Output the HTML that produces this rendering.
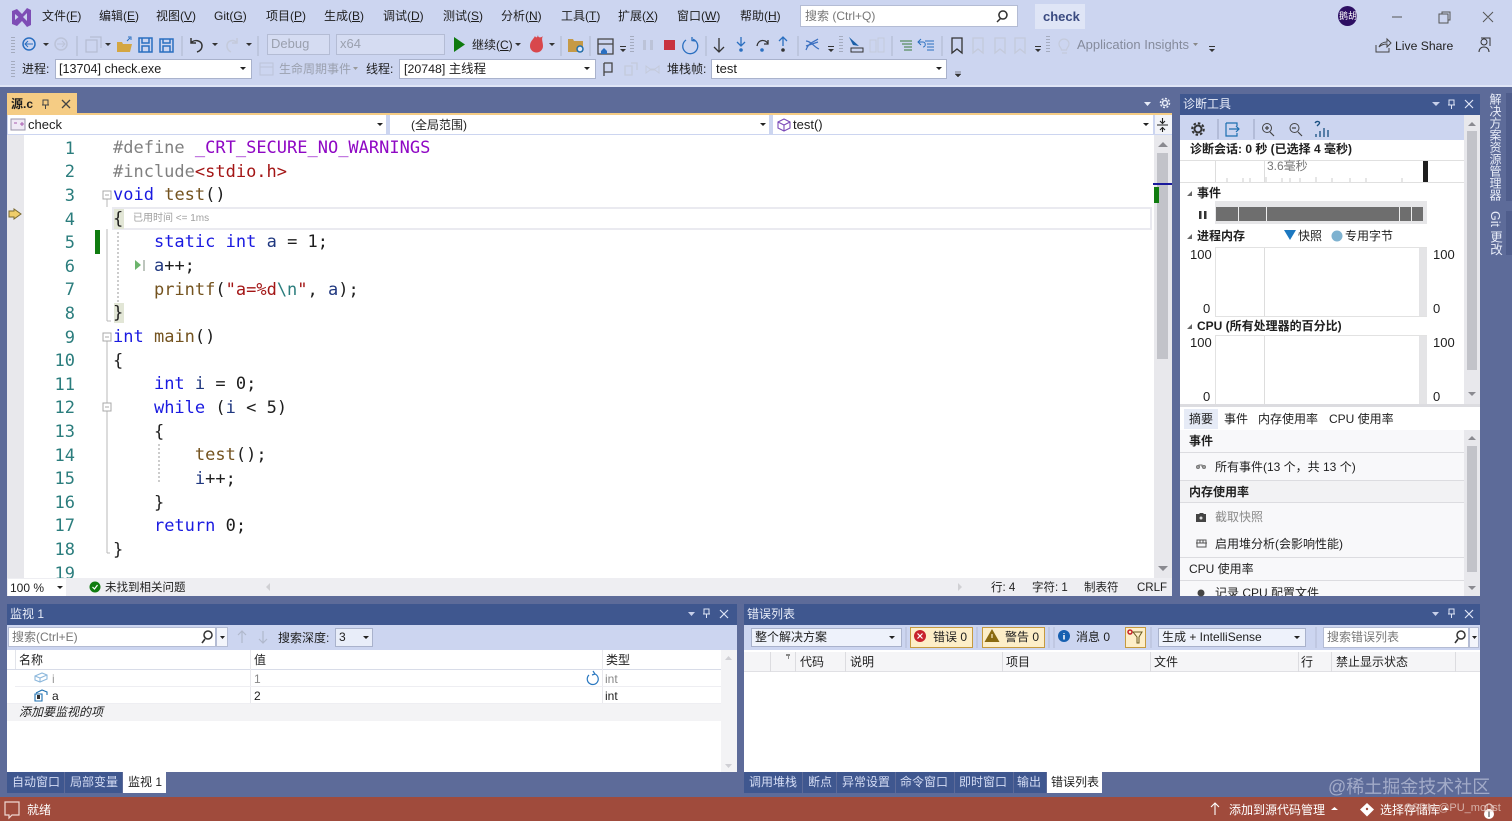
<!DOCTYPE html>
<html lang="zh">
<head>
<meta charset="utf-8">
<style>
html,body{margin:0;padding:0}
body{width:1512px;height:821px;overflow:hidden;position:relative;background:#5d6b99;font:12px/16px "Liberation Sans","Noto Sans CJK SC",sans-serif;color:#1e1e1e}
.b{position:absolute;box-sizing:border-box}
.t{position:absolute;white-space:nowrap;line-height:16px}
.c{position:absolute;white-space:pre;font:17px/24px "DejaVu Sans Mono","Liberation Mono",monospace;color:#1e1e1e;left:113px}
.n{position:absolute;font:17px/24px "DejaVu Sans Mono","Liberation Mono",monospace;color:#2b7d7d;width:51px;left:24px;text-align:right}
.k{color:#1a1ae0}.f{color:#74531f}.v{color:#1f377f}.s{color:#a31515}.m{color:#8f08c4}.e{color:#2b7d7d}.g{color:#808080}
.w{color:#fff}.gr{color:#9aa0ae}
u{text-decoration:underline}
svg{position:absolute;left:0;top:0}
</style>
</head>
<body>
<!-- top chrome -->
<div class="b" style="left:0;top:0;width:1512px;height:86px;background:#ccd5f0"></div>
<div class="b" style="left:0;top:85px;width:1512px;height:2px;background:#dfe5f6"></div>
<div class="t" style="left:42px;top:8px">文件(<u>F</u>)</div>
<div class="t" style="left:99px;top:8px">编辑(<u>E</u>)</div>
<div class="t" style="left:156px;top:8px">视图(<u>V</u>)</div>
<div class="t" style="left:214px;top:8px">Git(<u>G</u>)</div>
<div class="t" style="left:266px;top:8px">项目(<u>P</u>)</div>
<div class="t" style="left:324px;top:8px">生成(<u>B</u>)</div>
<div class="t" style="left:383px;top:8px">调试(<u>D</u>)</div>
<div class="t" style="left:443px;top:8px">测试(<u>S</u>)</div>
<div class="t" style="left:501px;top:8px">分析(<u>N</u>)</div>
<div class="t" style="left:561px;top:8px">工具(<u>T</u>)</div>
<div class="t" style="left:618px;top:8px">扩展(<u>X</u>)</div>
<div class="t" style="left:677px;top:8px">窗口(<u>W</u>)</div>
<div class="t" style="left:740px;top:8px">帮助(<u>H</u>)</div>
<div class="b" style="left:800px;top:5px;width:218px;height:22px;background:#fff;border:1px solid #b4bcd4"></div>
<div class="t" style="left:805px;top:8px;color:#777">搜索 (Ctrl+Q)</div>
<div class="b" style="left:1035px;top:4px;width:50px;height:25px;background:#dfe5f6"></div>
<div class="t" style="left:1043px;top:9px;font-weight:bold;color:#3a4a80;font-size:13px">check</div>
<div class="b" style="left:1338px;top:6px;width:19px;height:20px;border-radius:50%;background:#2d0f63"></div>
<div class="t" style="left:1339px;top:8px;color:#fff;font-size:9px">鹅胡</div>

<!-- toolbar row 2 -->
<div class="b" style="left:267px;top:34px;width:63px;height:21px;border:1px solid #b4bcd4;background:#d5dcf2"></div>
<div class="t gr" style="left:271px;top:36px;font-size:13px">Debug</div>
<div class="b" style="left:336px;top:34px;width:109px;height:21px;border:1px solid #b4bcd4;background:#d5dcf2"></div>
<div class="t gr" style="left:340px;top:36px;font-size:13px">x64</div>
<div class="t" style="left:472px;top:37px">继续(<u>C</u>)</div>
<div class="t gr" style="left:1077px;top:37px;font-size:13px;color:#858b9c">Application Insights</div>
<div class="t" style="left:1395px;top:38px;font-size:12.2px;color:#222">Live Share</div>

<!-- toolbar row 3 -->
<div class="t" style="left:22px;top:61px">进程:</div>
<div class="b" style="left:55px;top:59px;width:197px;height:20px;background:#fff;border:1px solid #a9b2cc"></div>
<div class="t" style="left:59px;top:61px;font-size:12.6px">[13704] check.exe</div>
<div class="t gr" style="left:279px;top:61px">生命周期事件</div>
<div class="t" style="left:366px;top:61px">线程:</div>
<div class="b" style="left:399px;top:59px;width:197px;height:20px;background:#fff;border:1px solid #a9b2cc"></div>
<div class="t" style="left:404px;top:61px;font-size:12.4px">[20748] 主线程</div>
<div class="t" style="left:667px;top:61px">堆栈帧:</div>
<div class="b" style="left:711px;top:59px;width:236px;height:20px;background:#fff;border:1px solid #a9b2cc"></div>
<div class="t" style="left:716px;top:61px;font-size:13px">test</div>

<!-- editor tab -->
<div class="b" style="left:7px;top:93px;width:70px;height:21px;background:#f5cc84"></div>
<div class="t" style="left:11px;top:96px;font-weight:bold">源.c</div>
<div class="b" style="left:7px;top:113px;width:1165px;height:2px;background:#f5cc84"></div>

<!-- nav bar -->
<div class="b" style="left:7px;top:115px;width:1165px;height:20px;background:#ccd5f0"></div>
<div class="b" style="left:8px;top:115px;width:378px;height:19px;background:#fff"></div>
<div class="b" style="left:390px;top:115px;width:379px;height:19px;background:#fff"></div>
<div class="b" style="left:773px;top:115px;width:380px;height:19px;background:#fff"></div>
<div class="b" style="left:1155px;top:115px;width:17px;height:19px;background:#f3f4f8"></div>
<div class="t" style="left:28px;top:117px;font-size:13px">check</div>
<div class="t" style="left:411px;top:117px">(全局范围)</div>
<div class="t" style="left:793px;top:117px;font-size:13px">test()</div>

<!-- editor -->
<div class="b" style="left:7px;top:135px;width:1165px;height:443px;background:#fff;overflow:hidden"></div>
<div class="b" style="left:7px;top:135px;width:17px;height:443px;background:#e8e8ec"></div>
<div class="b" style="left:112px;top:207px;width:1040px;height:23px;border:2px solid #eaeaf0;background:#fff"></div>
<div class="b" style="left:114px;top:209px;width:10px;height:20px;background:#e2e6d6"></div>
<div class="b" style="left:114px;top:303px;width:10px;height:20px;background:#e2e6d6"></div>
<div class="b" style="left:95px;top:230px;width:5px;height:24px;background:#107c10"></div>

<div class="n" style="top:137px">1</div><div class="n" style="top:160px">2</div><div class="n" style="top:184px">3</div><div class="n" style="top:208px">4</div><div class="n" style="top:231px">5</div><div class="n" style="top:255px">6</div><div class="n" style="top:278px">7</div><div class="n" style="top:302px">8</div><div class="n" style="top:326px">9</div><div class="n" style="top:349px">10</div><div class="n" style="top:373px">11</div><div class="n" style="top:396px">12</div><div class="n" style="top:420px">13</div><div class="n" style="top:444px">14</div><div class="n" style="top:467px">15</div><div class="n" style="top:491px">16</div><div class="n" style="top:514px">17</div><div class="n" style="top:538px">18</div><div class="n" style="top:562px;height:16px;overflow:hidden">19</div>

<div class="c" style="top:136px"><span class="g">#define</span> <span class="m">_CRT_SECURE_NO_WARNINGS</span></div>
<div class="c" style="top:160px"><span class="g">#include</span><span class="s">&lt;stdio.h&gt;</span></div>
<div class="c" style="top:183px"><span class="k">void</span> <span class="f">test</span>()</div>
<div class="c" style="top:207px">{</div>
<div class="t" style="left:133px;top:211px;font-size:10px;color:#a0a0a0">已用时间 &lt;= 1ms</div>
<div class="c" style="top:230px">    <span class="k">static</span> <span class="k">int</span> <span class="v">a</span> = 1;</div>
<div class="c" style="top:254px">    <span class="v">a</span>++;</div>
<div class="c" style="top:278px">    <span class="f">printf</span>(<span class="s">"a=%d</span><span class="e">\n</span><span class="s">"</span>, <span class="v">a</span>);</div>
<div class="c" style="top:301px">}</div>
<div class="c" style="top:325px"><span class="k">int</span> <span class="f">main</span>()</div>
<div class="c" style="top:349px">{</div>
<div class="c" style="top:372px">    <span class="k">int</span> <span class="v">i</span> = 0;</div>
<div class="c" style="top:396px">    <span class="k">while</span> (<span class="v">i</span> &lt; 5)</div>
<div class="c" style="top:420px">    {</div>
<div class="c" style="top:443px">        <span class="f">test</span>();</div>
<div class="c" style="top:467px">        <span class="v">i</span>++;</div>
<div class="c" style="top:491px">    }</div>
<div class="c" style="top:514px">    <span class="k">return</span> 0;</div>
<div class="c" style="top:538px">}</div>

<!-- editor scrollbar -->
<div class="b" style="left:1154px;top:135px;width:18px;height:443px;background:#e8e8ec"></div>
<div class="b" style="left:1157px;top:153px;width:11px;height:206px;background:#c2c3c9"></div>
<div class="b" style="left:1153px;top:183px;width:19px;height:2px;background:#1a1a9c"></div>
<div class="b" style="left:1154px;top:187px;width:5px;height:16px;background:#107c10"></div>

<!-- editor status -->
<div class="b" style="left:7px;top:578px;width:1165px;height:18px;background:#eeeef2"></div>
<div class="b" style="left:8px;top:579px;width:58px;height:17px;background:#fff"></div>
<div class="t" style="left:10px;top:580px">100 %</div>
<div class="t" style="left:105px;top:580px;font-size:11.5px">未找到相关问题</div>
<div class="t" style="left:991px;top:580px;font-size:11.5px">行: 4</div>
<div class="t" style="left:1032px;top:580px;font-size:11.5px">字符: 1</div>
<div class="t" style="left:1084px;top:580px;font-size:11.5px">制表符</div>
<div class="t" style="left:1137px;top:580px;font-size:11.5px">CRLF</div>

<!-- diagnostics -->
<div class="b" style="left:1180px;top:94px;width:300px;height:21px;background:#3f578f"></div>
<div class="t" style="left:1183px;top:96px;color:#e8ecf8">诊断工具</div>
<div class="b" style="left:1180px;top:115px;width:300px;height:481px;background:#fff"></div>
<div class="b" style="left:1180px;top:115px;width:284px;height:25px;background:#ccd5f0"></div>
<div class="b" style="left:1464px;top:115px;width:16px;height:289px;background:#e8e8ec"></div>
<div class="b" style="left:1467px;top:131px;width:10px;height:239px;background:#c2c3c9"></div>
<div class="t" style="left:1190px;top:141px;font-weight:bold">诊断会话: 0 秒 (已选择 4 毫秒)</div>
<div class="b" style="left:1180px;top:160px;width:284px;height:1px;background:#e0e0e0"></div>
<div class="b" style="left:1180px;top:182px;width:284px;height:1px;background:#e0e0e0"></div>
<div class="b" style="left:1215px;top:161px;width:1px;height:21px;background:#ddd"></div>
<div class="b" style="left:1264px;top:161px;width:1px;height:21px;background:#ddd"></div>
<div class="t" style="left:1267px;top:158px;color:#777">3.6毫秒</div>
<div class="b" style="left:1423px;top:161px;width:5px;height:21px;background:#1e1e1e"></div>
<div class="t" style="left:1197px;top:185px;font-weight:bold">事件</div>
<div class="b" style="left:1215px;top:201px;width:212px;height:23px;background:#e6e6e8"></div>
<div class="b" style="left:1216px;top:207px;width:207px;height:14px;background:#6e6e6e"></div>
<div class="b" style="left:1238px;top:207px;width:1px;height:14px;background:#eee"></div>
<div class="b" style="left:1266px;top:207px;width:1px;height:14px;background:#eee"></div>
<div class="b" style="left:1399px;top:207px;width:1px;height:14px;background:#eee"></div>
<div class="b" style="left:1411px;top:207px;width:1px;height:14px;background:#eee"></div>
<div class="t" style="left:1197px;top:228px;font-weight:bold">进程内存</div>
<div class="t" style="left:1298px;top:228px">快照</div>
<div class="t" style="left:1345px;top:228px">专用字节</div>
<div class="b" style="left:1215px;top:247px;width:212px;height:70px;border:1px solid #e2e2e2"></div>
<div class="b" style="left:1264px;top:248px;width:1px;height:68px;background:#ddd"></div>
<div class="b" style="left:1419px;top:248px;width:8px;height:68px;background:#e4e4e6"></div>
<div class="t" style="left:1190px;top:247px;font-size:13px">100</div>
<div class="t" style="left:1433px;top:247px;font-size:13px">100</div>
<div class="t" style="left:1203px;top:301px;font-size:13px">0</div>
<div class="t" style="left:1433px;top:301px;font-size:13px">0</div>
<div class="t" style="left:1197px;top:318px;font-weight:bold">CPU (所有处理器的百分比)</div>
<div class="b" style="left:1215px;top:335px;width:212px;height:69px;border:1px solid #e2e2e2;border-bottom:0"></div>
<div class="b" style="left:1264px;top:336px;width:1px;height:68px;background:#ddd"></div>
<div class="b" style="left:1419px;top:336px;width:8px;height:68px;background:#e4e4e6"></div>
<div class="t" style="left:1190px;top:335px;font-size:13px">100</div>
<div class="t" style="left:1433px;top:335px;font-size:13px">100</div>
<div class="t" style="left:1203px;top:389px;font-size:13px">0</div>
<div class="t" style="left:1433px;top:389px;font-size:13px">0</div>
<div class="b" style="left:1180px;top:404px;width:300px;height:3px;background:#dcdce0"></div>
<div class="b" style="left:1184px;top:409px;width:34px;height:20px;background:#e6ebf6"></div>
<div class="t" style="left:1189px;top:411px">摘要</div>
<div class="t" style="left:1224px;top:411px">事件</div>
<div class="t" style="left:1258px;top:411px">内存使用率</div>
<div class="t" style="left:1329px;top:411px">CPU 使用率</div>
<div class="b" style="left:1180px;top:430px;width:284px;height:166px;background:#f8f8fa"></div>
<div class="b" style="left:1464px;top:430px;width:16px;height:166px;background:#e8e8ec"></div>
<div class="b" style="left:1467px;top:446px;width:10px;height:126px;background:#c2c3c9"></div>
<div class="b" style="left:1180px;top:452px;width:284px;height:1px;background:#dcdce0"></div>
<div class="b" style="left:1180px;top:480px;width:284px;height:23px;background:#f2f2f4;border-top:1px solid #dcdce0;border-bottom:1px solid #dcdce0"></div>
<div class="b" style="left:1180px;top:557px;width:284px;height:1px;background:#dcdce0"></div>
<div class="b" style="left:1180px;top:580px;width:284px;height:1px;background:#dcdce0"></div>
<div class="t" style="left:1189px;top:433px;font-weight:bold">事件</div>
<div class="t" style="left:1215px;top:459px">所有事件(13 个，共 13 个)</div>
<div class="t" style="left:1189px;top:484px;font-weight:bold">内存使用率</div>
<div class="t" style="left:1215px;top:509px;color:#8a8a8a">截取快照</div>
<div class="t" style="left:1215px;top:536px">启用堆分析(会影响性能)</div>
<div class="t" style="left:1189px;top:561px">CPU 使用率</div>
<div class="b" style="left:1215px;top:585px;width:240px;height:11px;overflow:hidden"><div class="t" style="left:0;top:0">记录 CPU 配置文件</div></div>
<div class="b" style="left:1506px;top:93px;width:6px;height:108px;background:#4f5d8c"></div>
<div class="b" style="left:1506px;top:211px;width:6px;height:44px;background:#4f5d8c"></div>
<div class="t" style="left:1487px;top:93px;writing-mode:vertical-rl;font-size:12px;letter-spacing:0;color:#e8ecf8">解决方案资源管理器</div>
<div class="t" style="left:1487px;top:211px;writing-mode:vertical-rl;font-size:12.5px;color:#e8ecf8">Git 更改</div>

<!-- watch -->
<div class="b" style="left:7px;top:604px;width:730px;height:21px;background:#3f578f"></div>
<div class="t" style="left:10px;top:606px;color:#e8ecf8">监视 1</div>
<div class="b" style="left:7px;top:625px;width:730px;height:25px;background:#ccd5f0"></div>
<div class="b" style="left:8px;top:627px;width:208px;height:20px;background:#fff;border:1px solid #b4bcd4"></div>
<div class="b" style="left:216px;top:627px;width:12px;height:20px;background:#f3f5fb;border:1px solid #b4bcd4"></div>
<div class="t" style="left:12px;top:629px;color:#777">搜索(Ctrl+E)</div>
<div class="t" style="left:278px;top:630px">搜索深度:</div>
<div class="b" style="left:335px;top:628px;width:38px;height:19px;background:#e8edf9;border:1px solid #a9b2cc"></div>
<div class="t" style="left:339px;top:629px">3</div>
<div class="b" style="left:7px;top:650px;width:730px;height:122px;background:#fff"></div>
<div class="b" style="left:7px;top:650px;width:714px;height:20px;border-bottom:1px solid #d8dce8"></div>
<div class="b" style="left:15px;top:650px;width:1px;height:19px;background:#e2e4ea"></div>
<div class="b" style="left:250px;top:650px;width:1px;height:54px;background:#e8e8ec"></div>
<div class="b" style="left:602px;top:650px;width:1px;height:54px;background:#e8e8ec"></div>
<div class="b" style="left:721px;top:650px;width:16px;height:122px;background:#f3f3f5"></div>
<div class="b" style="left:15px;top:686px;width:706px;height:1px;background:#eeeef2"></div>
<div class="b" style="left:7px;top:703px;width:714px;height:1px;background:#eeeef2"></div>
<div class="b" style="left:7px;top:704px;width:714px;height:17px;background:#f3f3f5"></div>
<div class="t" style="left:19px;top:652px">名称</div>
<div class="t" style="left:254px;top:652px">值</div>
<div class="t" style="left:606px;top:652px">类型</div>
<div class="t" style="left:52px;top:671px;color:#999">i</div>
<div class="t" style="left:254px;top:671px;color:#888">1</div>
<div class="t" style="left:605px;top:671px;color:#888">int</div>
<div class="t" style="left:52px;top:688px">a</div>
<div class="t" style="left:254px;top:688px">2</div>
<div class="t" style="left:605px;top:688px">int</div>
<div class="t" style="left:19px;top:704px;font-style:italic">添加要监视的项</div>
<div class="b" style="left:7px;top:772px;width:57px;height:21px;background:#3f578f"></div>
<div class="b" style="left:65px;top:772px;width:57px;height:21px;background:#3f578f"></div>
<div class="b" style="left:123px;top:772px;width:43px;height:21px;background:#fff"></div>
<div class="t" style="left:12px;top:774px;color:#d4dcf4">自动窗口</div>
<div class="t" style="left:70px;top:774px;color:#d4dcf4">局部变量</div>
<div class="t" style="left:128px;top:774px">监视 1</div>

<!-- errors -->
<div class="b" style="left:744px;top:604px;width:736px;height:21px;background:#3f578f"></div>
<div class="t" style="left:747px;top:606px;color:#e8ecf8">错误列表</div>
<div class="b" style="left:744px;top:625px;width:736px;height:25px;background:#ccd5f0"></div>
<div class="b" style="left:751px;top:628px;width:151px;height:19px;background:#eef2fb;border:1px solid #a9b2cc"></div>
<div class="t" style="left:755px;top:629px">整个解决方案</div>
<div class="b" style="left:910px;top:627px;width:63px;height:21px;background:#fdeec8;border:1px solid #c69a3e"></div>
<div class="t" style="left:933px;top:629px">错误 0</div>
<div class="b" style="left:982px;top:627px;width:63px;height:21px;background:#fdeec8;border:1px solid #c69a3e"></div>
<div class="t" style="left:1005px;top:629px">警告 0</div>
<div class="t" style="left:1076px;top:629px">消息 0</div>
<div class="b" style="left:1125px;top:627px;width:21px;height:21px;background:#fdeec8;border:1px solid #c69a3e"></div>
<div class="b" style="left:1158px;top:628px;width:148px;height:19px;background:#eef2fb;border:1px solid #a9b2cc"></div>
<div class="t" style="left:1162px;top:629px">生成 + IntelliSense</div>
<div class="b" style="left:1323px;top:627px;width:146px;height:21px;background:#fff;border:1px solid #b4bcd4"></div>
<div class="b" style="left:1469px;top:627px;width:10px;height:21px;background:#f3f5fb;border:1px solid #b4bcd4"></div>
<div class="t" style="left:1327px;top:629px;color:#777">搜索错误列表</div>
<div class="b" style="left:744px;top:650px;width:736px;height:122px;background:#fff"></div>
<div class="b" style="left:744px;top:652px;width:736px;height:20px;background:#f5f5f7;border-bottom:1px solid #e0e0e4"></div>
<div class="b" style="left:770px;top:652px;width:1px;height:20px;background:#dcdce0"></div>
<div class="b" style="left:795px;top:652px;width:1px;height:20px;background:#dcdce0"></div>
<div class="b" style="left:845px;top:652px;width:1px;height:20px;background:#dcdce0"></div>
<div class="b" style="left:1002px;top:652px;width:1px;height:20px;background:#dcdce0"></div>
<div class="b" style="left:1150px;top:652px;width:1px;height:20px;background:#dcdce0"></div>
<div class="b" style="left:1298px;top:652px;width:1px;height:20px;background:#dcdce0"></div>
<div class="b" style="left:1331px;top:652px;width:1px;height:20px;background:#dcdce0"></div>
<div class="b" style="left:1455px;top:652px;width:1px;height:20px;background:#dcdce0"></div>
<div class="t" style="left:800px;top:654px">代码</div>
<div class="t" style="left:850px;top:654px">说明</div>
<div class="t" style="left:1006px;top:654px">项目</div>
<div class="t" style="left:1154px;top:654px">文件</div>
<div class="t" style="left:1301px;top:654px">行</div>
<div class="t" style="left:1336px;top:654px">禁止显示状态</div>
<div class="b" style="left:744px;top:772px;width:58px;height:21px;background:#3f578f"></div>
<div class="b" style="left:803px;top:772px;width:33px;height:21px;background:#3f578f"></div>
<div class="b" style="left:837px;top:772px;width:58px;height:21px;background:#3f578f"></div>
<div class="b" style="left:896px;top:772px;width:58px;height:21px;background:#3f578f"></div>
<div class="b" style="left:955px;top:772px;width:58px;height:21px;background:#3f578f"></div>
<div class="b" style="left:1014px;top:772px;width:32px;height:21px;background:#3f578f"></div>
<div class="b" style="left:1047px;top:772px;width:55px;height:21px;background:#fff"></div>
<div class="t" style="left:749px;top:774px;color:#d4dcf4">调用堆栈</div>
<div class="t" style="left:808px;top:774px;color:#d4dcf4">断点</div>
<div class="t" style="left:842px;top:774px;color:#d4dcf4">异常设置</div>
<div class="t" style="left:900px;top:774px;color:#d4dcf4">命令窗口</div>
<div class="t" style="left:959px;top:774px;color:#d4dcf4">即时窗口</div>
<div class="t" style="left:1017px;top:774px;color:#d4dcf4">输出</div>
<div class="t" style="left:1051px;top:774px">错误列表</div>
<div class="t" style="left:1328px;top:776px;font-size:18px;line-height:22px;color:#b9c0d8;opacity:.75">@稀土掘金技术社区</div>

<!-- status bar -->
<div class="b" style="left:0;top:797px;width:1512px;height:24px;background:#a04b3c"></div>
<div class="t w" style="left:27px;top:802px">就绪</div>
<div class="t w" style="left:1229px;top:802px">添加到源代码管理</div>
<div class="t w" style="left:1380px;top:802px">选择存储库</div>
<div class="t" style="left:1404px;top:800px;color:#d8b4ac;font-size:11px">CSDN @PU_mo0st</div>

<svg width="1512" height="821" viewBox="0 0 1512 821" fill="none">
<!-- VS logo -->
<path d="M12 11l5-2 5 5 5-6 4 2v15l-4 2-5-6-5 5-5-2zM15 14v6l3.500-3zM27 13l-4 4 4 4z" fill="#7e4db5" fill-rule="evenodd"/>
<!-- window controls -->
<path d="M1392 17h10M1439 14h9v9h-9zM1442 14v-2h8v8h-2M1483 12l10 10M1493 12l-10 10" stroke="#555" />
<!-- search icon -->
<path d="M1003 11a4 4 0 1 1-.1 0zM1001 18l-4 4" stroke="#333" stroke-width="1.500"/>
<!-- grips -->
<path d="M13 37v16M13 61v17M632 36v17M841 36v17M1048 36v17" stroke="#a4abbe" stroke-width="4" stroke-dasharray="1 2"/>
<!-- row 2 -->
<circle cx="29" cy="44" r="6" stroke="#2a6fc0" stroke-width="1.500"/><path d="M33 44h-8M28 41l-3 3 3 3" stroke="#2a6fc0"/>
<circle cx="61" cy="44" r="6" stroke="#bcc3d8" stroke-width="1.500"/><path d="M57 44h8M62 41l3 3-3 3" stroke="#bcc3d8"/>
<path d="M43 43h6l-3 3zM105 43h6l-3 3zM212 43h6l-3 3zM246 43h6l-3 3zM515 43h6l-3 3zM549 43h6l-3 3z" fill="#333"/>
<path d="M77 36v20M182 36v20M258 36v20M561 36v20M590 36v20M706 36v20M798 36v20M892 36v20M942 36v20" stroke="#aeb6cc"/>
<path d="M86 40h11v12h-11zM90 37h11v11" stroke="#b5bdd2" stroke-width="1.200"/>
<path d="M117 42h5l1 2h9l-2 8h-13z" fill="#d4a642"/><path d="M127 41l3-3M128 37h3v3" stroke="#2a6fc0"/>
<path d="M139 38h13v14h-13zM142 38v5h7v-5M142 52v-6h7v6" stroke="#2a6fc0" stroke-width="1.500"/>
<path d="M160 39h13v13h-13zM163 39v4h7v-4M163 52v-6h7v6" stroke="#2a6fc0" stroke-width="1.500"/>
<path d="M191 38v5h5M191 43c3-4 11-3 11 3 0 3-2 5-5 6" stroke="#333" stroke-width="1.500"/>
<path d="M237 38v5h-5M237 43c-3-4-10-3-10 3 0 3 2 5 4 6" stroke="#c4cadb" stroke-width="1.500"/>
<path d="M454 37l11 7.500-11 7.500z" fill="#0e7a0e"/>
<path d="M530 46c0-5 3-6 5-10 1 2 2 2 3-1 0 3 3 3 5 1-2 3 0 6 0 10a6.500 6.500 0 0 1-13 0z" fill="#d8474c"/>
<path d="M568 39h5l1 2h9v11h-15z" fill="#c69a46"/><circle cx="580" cy="49" r="3" stroke="#1f6fb0" stroke-width="1.500" fill="#dfe7f6"/>
<path d="M598 39h15v15h-15zM598 44h15" stroke="#444" stroke-width="1.300"/><path d="M601 51l3-3 3 3v3h-6z" fill="#2a6fc0"/>
<path d="M620 49h6l-3 3zM620 46h6v1h-6zM828 49h6l-3 3zM828 46h6v1h-6zM1035 49h6l-3 3zM1035 46h6v1h-6zM1209 49h6l-3 3zM1209 46h6v1h-6z" fill="#333"/>
<path d="M643 40h3v10h-3zM650 40h3v10h-3z" fill="#bcc3d8"/>
<rect x="664" y="40" width="11" height="10" fill="#c8333f"/>
<path d="M686 40a7.500 7.500 0 1 0 7-.8M692 37v3.500l3.500 .5" stroke="#2a6fc0" stroke-width="1.300"/>
<path d="M719 38v14M714 47l5 5 5-5" stroke="#333" stroke-width="1.300"/>
<path d="M741 37v8M737 42l4 4 4-4" stroke="#2a6fc0" stroke-width="1.300"/><circle cx="741" cy="50" r="1.800" fill="#2a6fc0"/>
<path d="M757 46c1-7 9-7 11-2M768 40v4h-4" stroke="#333" stroke-width="1.300"/><circle cx="762" cy="50" r="1.800" fill="#2a6fc0"/>
<path d="M783 46v-9M779 41l4-4 4 4" stroke="#2a6fc0" stroke-width="1.300"/><circle cx="783" cy="50" r="1.800" fill="#333"/>
<path d="M806 50c3-8 8-8 12-11M806 41c5 0 8 6 13 8M806 46l12-4" stroke="#3a6fc0" stroke-width="1.200"/>
<path d="M849 37l4 8 6 1z" fill="#1a5fa8"/><path d="M851 48h12v4h-12z" stroke="#333"/>
<path d="M870 40h6v12h-6zM878 38h6v14h-6z" stroke="#c4cadb"/>
<path d="M900 41h12M902 44h10M904 47h8M904 50h8" stroke="#3a7a3a"/>
<path d="M921 39l-3 3 3 3M918 42h5c3 0 3 5 0 5M925 41h9M927 44h7M927 47h7M927 50h7" stroke="#2a6fc0"/>
<path d="M952 38h10v15l-5-4-5 4z" stroke="#333" stroke-width="1.300"/>
<path d="M973 38h10v15l-5-4-5 4zM995 38h10v15l-5-4-5 4zM1015 38h10v15l-5-4-5 4z" stroke="#c4cadb" stroke-width="1.300"/>
<path d="M1060 39a5 5 0 0 1 5 5c0 3-2 3-2.500 6h-5c-.5-3-2.500-3-2.500-6a5 5 0 0 1 5-5zM1058 53h5" stroke="#c4cadb" stroke-width="1.200" transform="translate(4)"/>
<path d="M1193 43h5l-2.500 3z" fill="#888"/>
<path d="M1376 45v7h13v-4M1379 47c1-3 4-5 8-5v-3l4 4-4 4v-3c-3 0-6 1-8 3z" stroke="#444"/>
<circle cx="1484" cy="42" r="3" stroke="#333"/><path d="M1479 52c0-3 2-5 5-5s5 2 5 5M1481 38h9v8" stroke="#333"/>
<!-- row 3 -->
<path d="M240 67h6l-3 3zM584 67h6l-3 3zM936 67h6l-3 3z" fill="#222"/>
<path d="M260 63h13v12h-13zM260 67h13" stroke="#bcc3d8"/><path d="M353 67h5l-2.500 3z" fill="#999"/>
<path d="M604 63v13M604 63h8v9h-8" stroke="#444" stroke-width="1.300"/>
<path d="M625 66h7v9h-7zM631 63h6v7" stroke="#c4cadb" stroke-width="1.300"/>
<path d="M646 66l4 3 5 0 4-3v7l-4-3h-5l-4 3z" stroke="#c4cadb"/>
<path d="M955 72h6M955 74h6l-3 3z" fill="#333" stroke="#333" stroke-width=".5"/>
<!-- tab icons -->
<path d="M43 100v5h5v-5zM45.500 105v4M42 105h7" stroke="#444"/>
<path d="M62 100l8 8M70 100l-8 8" stroke="#444" stroke-width="1.300"/>
<path d="M1144 102h7l-3.500 4z" fill="#e8ecf8"/>
<circle cx="1165" cy="103" r="2.500" stroke="#e8ecf8" stroke-width="1.500"/><circle cx="1165" cy="103" r="4.500" stroke="#e8ecf8" stroke-width="1.500" stroke-dasharray="2 1.500"/>
<!-- nav -->
<path d="M377 123h6l-3 3zM760 123h6l-3 3zM1143 123h6l-3 3z" fill="#222"/>
<path d="M11 119h14v11h-14z" stroke="#9a94aa" fill="#efeaf5"/><path d="M14 123h3M20 124h4M22 122v4" stroke="#a85ab0"/>
<path d="M784 119l6 3v6l-6 3-6-3v-6zM778 122l6 3 6-3M784 125v6" stroke="#7b4bb8" stroke-width="1.100"/>
<path d="M1157 125h11M1162.500 118v5M1162.500 132v-5M1160 121l2.500 2.500 2.500-2.500M1160 130l2.500-2.500 2.500 2.500" stroke="#222" stroke-width="1.100"/>
<!-- editor marks -->
<path d="M9 211h5v-2l7 5-7 5v-2h-5z" fill="#f0ce6a" stroke="#7a6a30"/>
<path d="M107 199v8M107 229v92M107 321h4M107 341v212M107 553h3" stroke="#b8b8b8"/>
<path d="M118 232v70M159 444v40" stroke="#999" stroke-dasharray="2 2"/>
<path d="M103 191h8v8h-8zM105 195h4M103 333h8v8h-8zM105 337h4M103 403h8v8h-8zM105 407h4" stroke="#a8a8a8" fill="#fff"/>
<path d="M135 260l6 5-6 5z" fill="#6cb46c"/><path d="M144 260v11" stroke="#9aa79a" stroke-width="1.300"/>
<path d="M1158 147l5-5 5 5zM1158 566l5 5 5-5z" fill="#8a8a90"/>
<!-- status check -->
<circle cx="95" cy="587" r="5.500" fill="#107c10"/><path d="M92.500 587l2 2 3-4" stroke="#fff" stroke-width="1.200"/>
<path d="M270 583v8l-4-4zM958 583v8l4-4z" fill="#d0d0d4"/>
<path d="M57 586h6l-3 3z" fill="#222"/>
<!-- diag title -->
<path d="M1432 102h8l-4 4z" fill="#c8d0ea"/>
<path d="M1449 100v5h5v-5zM1451.500 105v4M1448 105h7" stroke="#dfe5f6"/>
<path d="M1465 100l8 8M1473 100l-8 8" stroke="#dfe5f6" stroke-width="1.200"/>
<circle cx="1198" cy="129" r="3.500" stroke="#333" stroke-width="2"/><circle cx="1198" cy="129" r="5.800" stroke="#333" stroke-width="2" stroke-dasharray="2.500 2"/>
<path d="M1218 119v20M1254 119v20" stroke="#9aa4c0"/>
<path d="M1226 123h11v3M1226 123v13h11v-3M1229 129h10M1236 126l3 3-3 3" stroke="#1c6fb0" stroke-width="1.200"/>
<circle cx="1267" cy="128" r="4.500" stroke="#444"/><path d="M1270 132l4 4M1265 128h4M1267 126v4M1298 132l4 4M1292 128h4" stroke="#444" stroke-width="1.200"/>
<circle cx="1294.500" cy="128" r="4.500" stroke="#444"/>
<path d="M1316 134v3M1320 131v6M1324 128v9M1328 130v7M1315 123c2-3 6-1 4 1l-2 2" stroke="#184f80" stroke-width="1.300"/>
<path d="M1468 126l4-4 4 4zM1468 392l4 4 4-4zM1468 440l4-4 4 4zM1468 586l4 4 4-4z" fill="#8a8a90"/>
<path d="M1187 196l5-5v5zM1187 239l5-5v5zM1187 329l5-5v5z" fill="#666"/>
<path d="M1199 211h2.500v8h-2.500zM1204 211h2.500v8h-2.500z" fill="#333"/>
<path d="M1284 230h12l-6 10z" fill="#1c78c0"/><circle cx="1337" cy="236" r="5.500" fill="#7eb2d0"/>
<path d="M1227 178v4M1243 178v4M1250 178v4M1266 177v5M1282 178v4M1290 178v4M1300 178v4M1316 177v5M1332 178v4M1350 178v4M1366 178v4M1402 178v4" stroke="#ccc"/>
<path d="M1196 467h3v-2h3v2M1202 467h3" stroke="#777"/><circle cx="1198" cy="467" r="1.500" stroke="#777"/><circle cx="1204" cy="467" r="1.500" stroke="#777"/>
<path d="M1196 514h3l1-1h3l1 1h2v8h-10z" fill="#444"/><circle cx="1201" cy="518" r="1.500" fill="#ddd"/>
<path d="M1197 540h9v7h-9zM1196 543h11M1200 540v3M1203 540v3" stroke="#555"/>
<circle cx="1201" cy="593" r="3.500" fill="#444"/>
<!-- watch -->
<path d="M688 612h7l-3.500 4zM1432 612h7l-3.500 4z" fill="#c8d0ea"/>
<path d="M704 609v5h5v-5zM706.500 614v4M703 614h7M1449 609v5h5v-5zM1451.500 614v4M1448 614h7" stroke="#dfe5f6"/>
<path d="M720 610l8 8M728 610l-8 8M1465 610l8 8M1473 610l-8 8" stroke="#dfe5f6" stroke-width="1.200"/>
<circle cx="208" cy="635" r="4" stroke="#333" stroke-width="1.500"/><circle cx="1461" cy="635" r="4" stroke="#333" stroke-width="1.500"/>
<path d="M205 639l-3 4M1458 639l-3 4" stroke="#333" stroke-width="1.600"/>
<path d="M220 636h5l-2.500 3zM363 636h6l-3 3zM1472 636h5l-2.500 3zM889 636h6l-3 3zM1294 636h6l-3 3z" fill="#222"/>
<path d="M242 643v-12M238 635l4-4 4 4M263 631v12M259 639l4 4 4-4" stroke="#b0b8cc" stroke-width="1.200"/>
<path d="M725 660l3.500-4 3.500 4zM725 764l3.500 4 3.500-4z" fill="#cfcfd4"/>
<path d="M35 676l7-3 5 2v4l-7 3-5-2zM35 676l5 2 7-3M40 678v4" stroke="#8db8dc" stroke-width="1.100"/>
<path d="M36 693l6-3 5 2v3M35 694h7v7h-7z" stroke="#1c6fb0" stroke-width="1.100"/><path d="M37 695h3v4h-3z" fill="#333"/>
<path d="M589 675a5.500 5.500 0 1 0 6-1M593 671l2 3-3 1" stroke="#2a78c0" stroke-width="1.200"/>
<!-- errors -->
<circle cx="920" cy="636" r="6" fill="#c8222c"/><path d="M917.500 633.500l5 5M922.500 633.500l-5 5" stroke="#fff" stroke-width="1.200"/>
<path d="M992 629l7.500 13h-15z" fill="#8a6a10"/><path d="M992 634v4" stroke="#fdeec8" stroke-width="1.200"/>
<circle cx="1064" cy="636" r="6" fill="#1660b0"/><path d="M1064 633v.8M1064 635v4.500" stroke="#fff" stroke-width="1.500"/>
<circle cx="1130" cy="632" r="2" stroke="#c8222c" stroke-width="1.500"/><path d="M1133 632h9l-3 5v6h-2v-6z" stroke="#6a5a20"/>
<path d="M1054 627v21M977 627v21M1049 627v21M1151 627v21M906 627v21M1316 627v21" stroke="#b4bcd4"/>
<path d="M786 654h4v2h-1v3h-1v-3h-2z" fill="#888"/>
<!-- status icons -->
<path d="M5 802h14v13h-7l-3 3v-3h-4z" stroke="#f0d8d2" stroke-width="1.200"/>
<path d="M1215 815v-12M1211 807l4-4 4 4" stroke="#fff" stroke-width="1.100"/>
<path d="M1331 810l3.500-3 3.500 3zM1442 810l3.500-3 3.500 3z" fill="#fff"/>
<path d="M1367 803l7 6.500-7 7-7-7z" fill="#fff"/><circle cx="1367" cy="809" r="1.200" fill="#a04b3c"/>
<circle cx="1489" cy="814" r="5" fill="#fff"/><path d="M1489 811v6" stroke="#333"/>
<path d="M1485 808a4 4 0 0 1 8 0v3h-8z" stroke="#f0d8d2"/>
</svg>
</body>
</html>
